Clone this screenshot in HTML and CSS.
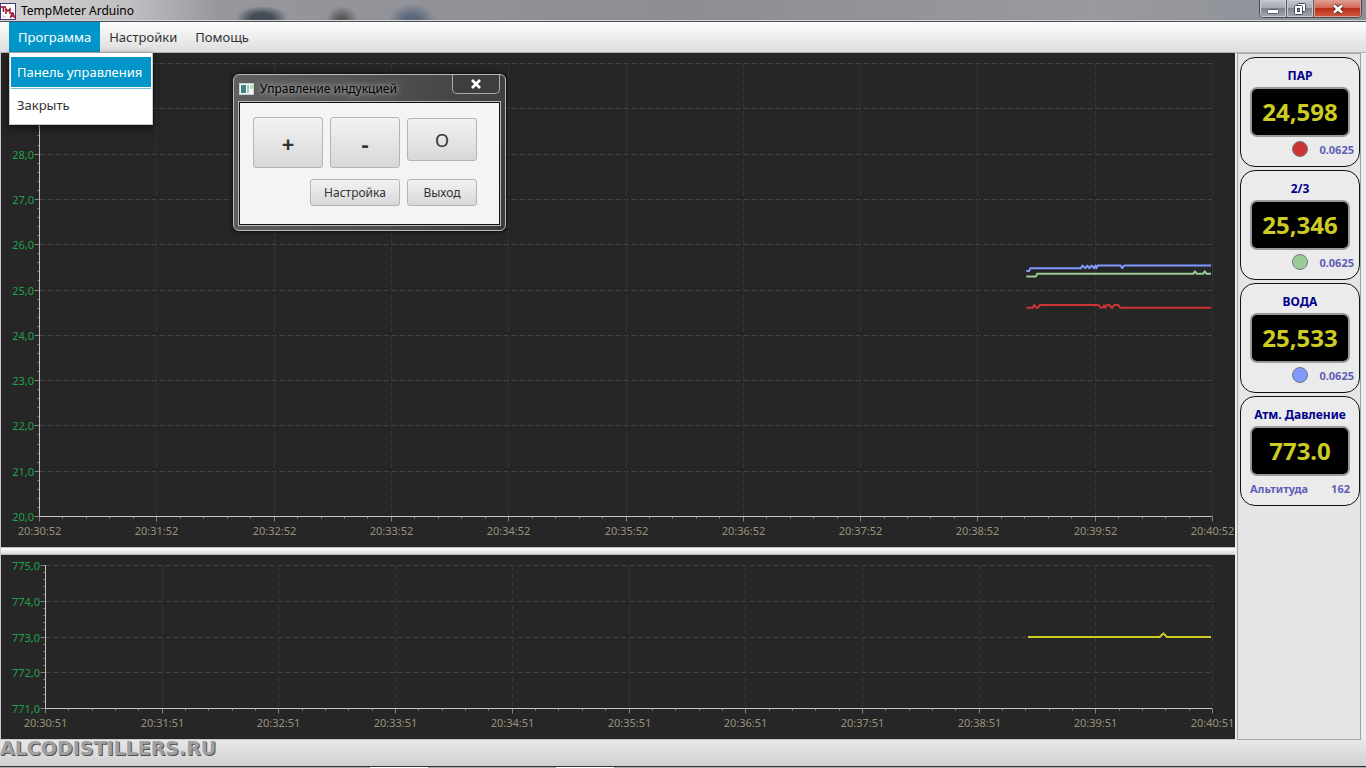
FILE: index.html
```html
<!DOCTYPE html>
<html lang="ru">
<head>
    <meta charset="UTF-8">
    <meta name="viewport" content="width=device-width, initial-scale=1.0">
    <title>TempMeter Arduino</title>
    <link rel="stylesheet" href="styles.css">
</head>
<body>
    <header class="titlebar">
        <svg class="app-icon" width="19" height="18" viewBox="0 0 19 18" aria-hidden="true">
            <rect x="0.5" y="1.500" width="15" height="16" fill="#fff" stroke="#3c3c7c"/>
            <path d="M1 5H6M3.500 5V10M6 12V7L8 9L10 7V12" fill="none" stroke="#a01020" stroke-width="1.500"/>
            <path d="M10.500 16L12 11H13L14.500 16M11 14H14" fill="none" stroke="#a01020" stroke-width="1.500"/>
            <path d="M3 13V16M5 14V16" stroke="#d8b8c0"/>
        </svg>
        <h1>TempMeter Arduino</h1>
        <div class="win-buttons">
            <button class="min" aria-label="Свернуть">
                <svg width="14" height="14" viewBox="0 0 14 14"><rect x="1.5" y="7.5" width="11" height="4" rx="1" fill="#fff" stroke="#555a66"/></svg>
            </button>
            <button class="max" aria-label="Восстановить">
                <svg width="14" height="14" viewBox="0 0 14 14" fill="#fff" stroke="#444a56">
                    <rect x="4.500" y="1.500" width="8" height="8" rx="1"/>
                    <rect x="1.500" y="3.500" width="8" height="9" rx="1"/>
                    <rect x="4.500" y="6.500" width="2" height="3" fill="#8a8f9a"/>
                </svg>
            </button>
            <button class="close" aria-label="Закрыть окно">
                <svg width="14" height="14" viewBox="0 0 14 14"><path d="M3 3.500L11 10.500M11 3.500L3 10.500" stroke="#5a2a24" stroke-width="4.500"/><path d="M3 3.500L11 10.500M11 3.500L3 10.500" stroke="#fff" stroke-width="2.600"/></svg>
            </button>
        </div>
    </header>

    <nav class="menubar">
        <div class="menu">
            <button class="menu-btn active">Программа</button>
            <div class="dropdown">
                <button class="item active">Панель управления</button>
                <button class="item">Закрыть</button>
            </div>
        </div>
        <div class="menu"><button class="menu-btn">Настройки</button></div>
        <div class="menu"><button class="menu-btn">Помощь</button></div>
    </nav>

    <main>
        <div class="charts">
            <svg class="chart" id="temp"></svg>
            <div class="splitter"></div>
            <svg class="chart" id="press"></svg>
        </div>
        <aside class="sensors">
            <section class="card">
                <h2>ПАР</h2>
                <output class="display">24,598</output>
                <p class="info"><span class="dot red"></span><span>0.0625</span></p>
            </section>
            <section class="card">
                <h2>2/3</h2>
                <output class="display">25,346</output>
                <p class="info"><span class="dot green"></span><span>0.0625</span></p>
            </section>
            <section class="card">
                <h2>ВОДА</h2>
                <output class="display">25,533</output>
                <p class="info"><span class="dot blue"></span><span>0.0625</span></p>
            </section>
            <section class="card">
                <h2>Атм. Давление</h2>
                <output class="display">773.0</output>
                <p class="info alt"><span>Альтитуда</span><span>162</span></p>
            </section>
        </aside>
    </main>

    <footer class="statusbar">ALCODISTILLERS.RU</footer>
    <div class="taskbar"><span></span><span></span></div>

    <div class="window" role="dialog" aria-labelledby="win-title">
        <div class="window-head">
            <svg width="15" height="12" viewBox="0 0 15 12" aria-hidden="true">
                <rect x="0.500" y="0.500" width="14" height="11" fill="#f4f8f8" stroke="#c4d0d0"/>
                <rect x="2" y="2" width="5" height="8" fill="#3f8484"/>
                <rect x="8" y="2" width="2" height="8" fill="#a8c4c4"/>
                <rect x="11" y="2" width="3" height="4" fill="#b8e0b8"/>
            </svg>
            <h2 id="win-title">Управление индукцией</h2>
            <button class="window-close" aria-label="Закрыть">
                <svg width="12" height="10" viewBox="0 0 12 10"><path d="M2 1L10 9M10 1L2 9" stroke="#fff" stroke-width="2.600"/></svg>
            </button>
        </div>
        <div class="window-body">
            <button class="big">+</button>
            <button class="big">-</button>
            <button class="power">O</button>
            <button class="setup">Настройка</button>
            <button class="exit">Выход</button>
        </div>
    </div>

    <script src="script.js"></script>
</body>
</html>
```
FILE: styles.css
```css
* {
    box-sizing: border-box;
    margin: 0;
    padding: 0;
}
html , body {
    width: 100%;
    height: 100%;
}
body {
    display: flex;
    flex-direction: column;
    overflow: hidden;
    background-color: #ececec;
    color: #333;
    font-family: "Noto Sans", "Open Sans", sans-serif;
    font-size: 12px;
}
button {
    border: none;
    background: none;
    color: inherit;
    font-family: inherit;
    font-size: 12px;
}
svg {
    display: block;
}

/* title bar */
.titlebar {
    display: flex;
    align-items: center;
    flex: none;
    height: 22px;
    padding-right: 4px;
    border-bottom: 1px solid #50525a;
    box-shadow: inset 0 -1px #d4d5da;
    background:
        radial-gradient(ellipse 26px 12px at 262px 18px, #454d56 40%, transparent),
        radial-gradient(ellipse 16px 14px at 342px 20px, #585858 20%, transparent),
        radial-gradient(ellipse 24px 16px at 412px 20px, #5c697c 30%, transparent),
        linear-gradient(90deg, #d4d2d4, #c0bfc2 130px, #96969c 220px, #8c8e94 50%, #999a9f 80%, #8b8f97);
}
.titlebar h1 {
    flex: 1;
    margin-left: 2px;
    color: #000;
    font-size: 12px;
    font-weight: normal;
}
.win-buttons {
    display: flex;
    align-self: flex-start;
    height: 18px;
    border: 1px solid #484b52;
    border-top: none;
    border-radius: 0 0 5px 5px;
    overflow: hidden;
}
.win-buttons button {
    display: flex;
    align-items: center;
    justify-content: center;
    width: 27px;
    border-right: 1px solid #555860;
    background: linear-gradient(#c4c7cd, #a4a8b0 50%, #7f848e 50%, #a2a7b0);
    box-shadow: inset 0 0 0 1px #c8cbd2;
}
.win-buttons .close {
    width: 47px;
    border-right: none;
    background: linear-gradient(#e0a095, #d0604c 50%, #b8301a 50%, #d05a40);
    box-shadow: inset 0 0 0 1px #e09c90;
}

/* menu */
.menubar {
    display: flex;
    flex: none;
    height: 31px;
    padding-left: 9px;
    border-bottom: 1px solid #b4b4b4;
    background: linear-gradient(#fcfcfc, #dedede);
}
.menu {
    position: relative;
}
.menu-btn {
    height: 30px;
    padding: 0 9px;
    font-size: 13px;
}
.active {
    background-color: #0096c9;
    color: #fff;
}
.dropdown {
    position: absolute;
    top: 31px;
    left: 0;
    z-index: 2;
    width: 144px;
    padding: 4px 1px 3px;
    border: 1px solid #c8c8c8;
    border-top: none;
    background-color: #fff;
    box-shadow: 0 3px 8px rgba(0, 0, 0, 0.6);
}
.item {
    display: block;
    width: 100%;
    height: 30px;
    padding-left: 6px;
    font-size: 13px;
    text-align: left;
    white-space: nowrap;
}
.item + .item {
    height: 33px;
    border-top: 1px solid #7fbcd4;
    margin-top: 1px;
}

/* charts */
main {
    display: flex;
    flex: 1;
    min-height: 0;
    padding-right: 5px;
}
.charts {
    display: grid;
    grid-template-rows: 1fr 8px 184px;
    flex: 1;
    min-width: 0;
    border-left: 1px solid #c8c8c8;
    border-bottom: 1px solid #c8c8c8;
}
.chart {
    width: 100%;
    height: 100%;
    background-color: #262626;
}
.splitter {
    border: 1px solid #bbb;
    border-width: 1px 0;
    background: linear-gradient(#fff, #dcdcdc);
}
.chart text {
    font-size: 11px;
}
.grid {
    stroke: #444;
    stroke-dasharray: 5 3;
}
.grid.v {
    stroke: #383838;
}
.axis {
    stroke: #c4c4c4;
}
.tick {
    stroke: #808080;
}
.y-label {
    fill: #22a04c;
    text-anchor: end;
}
.x-label {
    fill: #98927a;
    text-anchor: middle;
}
.line {
    fill: none;
    stroke-width: 2;
    stroke-linejoin: round;
}

/* sensors */
.sensors {
    display: flex;
    flex-direction: column;
    gap: 3px;
    flex: none;
    width: 124px;
    margin-left: 2px;
    padding: 3px 0 0 2px;
    border: 1px solid #a4a4a4;
    background-color: #e5e5e5;
}
.card {
    display: flex;
    flex-direction: column;
    align-items: center;
    width: 120px;
    height: 110px;
    padding: 9px 5px 0;
    border: 1px solid #111;
    border-radius: 15px;
    background-color: #ebebeb;
}
.card h2 {
    color: #00008b;
    font-size: 12px;
    line-height: 18px;
}
.display {
    width: 100px;
    height: 50px;
    margin-top: 2px;
    border: 2px solid #999;
    border-radius: 7px;
    background-color: #000;
    color: #cccc22;
    font-size: 24px;
    font-weight: bold;
    line-height: 46px;
    text-align: center;
}
.info {
    display: grid;
    grid-template-columns: 1fr 16px 1fr;
    align-items: center;
    width: 100%;
    height: 24px;
    color: #5f5fb8;
    font-size: 11px;
    font-weight: bold;
}
.info span:last-child {
    justify-self: end;
}
.info .dot {
    grid-column: 2;
}
.info.alt {
    display: flex;
    justify-content: space-between;
    padding: 0 4px;
}
.dot {
    width: 16px;
    height: 16px;
    border: 1px solid #777;
    border-radius: 50%;
}
.red {
    background-color: #cc3333;
}
.green {
    background-color: #99cc99;
}
.blue {
    background-color: #8099ff;
}

/* bottom */
.statusbar {
    flex: none;
    height: 26px;
    background: linear-gradient(#e8e8e8, #d0d0d0);
    color: #a0a0a0;
    font-family: "DejaVu Sans", sans-serif;
    font-size: 19px;
    font-weight: bold;
    line-height: 16px;
    text-shadow: 1px 1px #505050;
}
.taskbar {
    display: flex;
    gap: 128px;
    flex: none;
    height: 2px;
    padding-left: 370px;
    border-top: 1px solid #333;
    background-color: #aaa;
}
.taskbar span {
    width: 58px;
    background-color: #fff;
}

/* induction window */
.window {
    position: absolute;
    top: 74px;
    left: 233px;
    width: 273px;
    padding: 0 5px 5px;
    border: 1px solid #b8b8b8;
    border-radius: 6px;
    background: linear-gradient(100deg, #606060, #4c4c4c 60%, #3c3c3c);
    box-shadow: 0 0 4px #000;
}
.window-head {
    display: flex;
    align-items: center;
    height: 27px;
}
.window-head h2 {
    flex: 1;
    margin-left: 6px;
    color: #000;
    font-size: 12px;
    font-weight: normal;
    text-shadow: 0 0 5px #bbb, 0 0 10px #aaa;
}
.window-close {
    display: flex;
    align-items: center;
    justify-content: center;
    align-self: flex-start;
    width: 48px;
    height: 19px;
    border: 1px solid #aaa;
    border-top: none;
    border-radius: 0 0 5px 5px;
    background-color: #3e3e3e;
}
.window-body {
    display: grid;
    grid-template-columns: 70px 70px 70px;
    gap: 11px 7px;
    padding: 14px 13px 18px;
    border: 1px solid #111;
    outline: 1px solid #bbb;
    background-color: #f4f4f4;
}
.window-body button {
    height: 27px;
    border: 1px solid #b4b4b4;
    border-radius: 3px;
    background: linear-gradient(#f2f2f2, #d8d8d8);
}
.window-body .big {
    height: 51px;
    font-size: 22px;
    font-weight: bold;
}
.window-body .power {
    align-self: center;
    height: 43px;
    margin-bottom: 6px;
    font-size: 18px;
}
.window-body .setup {
    grid-column: 1 / 3;
    justify-self: end;
    width: 90px;
}
```
FILE: script.js
```js
// time is in seconds from the left edge of the chart
const temp = {
    id: "temp", left: 38, right: 23, top: 10, bottom: 31,
    min: 20, max: 30, labelMax: 28, start: [20, 30, 52],
    lines: [
        { color: "#8099ff", data: [[505,25.42],[506.5,25.42],[507,25.48],[533,25.48],[533.7,25.54],[535.2,25.48],[536.3,25.54],[537.2,25.48],[538.5,25.54],[539.7,25.48],[540.4,25.54],[540.8,25.48],[541.5,25.54],[553.3,25.54],[554.1,25.48],[555,25.54],[599.5,25.54]] },
        { color: "#99cc99", data: [[505,25.3],[510,25.3],[510.6,25.36],[590.5,25.36],[591.3,25.41],[592.1,25.36],[595.5,25.36],[596.3,25.41],[597.1,25.36],[599.5,25.36]] },
        { color: "#cc3333", data: [[505,24.61],[508.3,24.61],[509.1,24.67],[510,24.61],[511,24.61],[512,24.67],[541.9,24.67],[543,24.61],[544,24.61],[544.8,24.66],[545.4,24.61],[546.2,24.67],[547.5,24.67],[548.5,24.61],[549.1,24.61],[550,24.67],[552,24.67],[553,24.61],[599.5,24.61]] }
    ]
};
const press = {
    id: "press", left: 44, right: 23, top: 10, bottom: 31,
    min: 771, max: 775, labelMax: 775, start: [20, 30, 51],
    lines: [
        { color: "#cccc22", data: [[505.4,773],[573.1,773],[575,773.1],[576.8,773],[599.5,773]] }
    ]
};

function line(x1, y1, x2, y2, cls) {
    return `<line x1="${x1}" y1="${y1}" x2="${x2}" y2="${y2}" class="${cls}"/>`;
}

function draw(c) {
    const svg = document.getElementById(c.id);
    const x2 = svg.clientWidth - c.right;
    const y2 = svg.clientHeight - c.bottom;
    const getX = t => c.left + (x2 - c.left) * t / 600;
    const getY = v => y2 + 0.5 - (y2 - c.top) * (v - c.min) / (c.max - c.min);
    const base = y2 + 0.5;
    const side = c.left + 0.5;
    let out = "";

    for (let i = 0; i <= (c.max - c.min) * 5; i++) {
        const v = c.min + i / 5;
        const y = Math.floor(getY(v)) + 0.5;
        const major = i % 5 === 0;
        if (major && i > 0) out += line(side, y, x2, y, "grid");
        out += line(side - (major ? 5 : 2), y, side, y, "tick");
        if (major && v <= c.labelMax) {
            out += `<text x="${c.left - 5}" y="${y + 4}" class="y-label">${v},0</text>`;
        }
    }
    for (let i = 0; i <= 50; i++) {
        const x = Math.round(getX(i * 12)) + 0.5;
        const major = i % 5 === 0;
        if (major && i > 0) out += line(x, c.top, x, base, "grid v");
        out += line(x, base, x, base + (major ? 5 : 2), "tick");
        if (major) {
            const text = `${c.start[0]}:${c.start[1] + i / 5}:${c.start[2]}`;
            out += `<text x="${x}" y="${base + 18}" class="x-label">${text}</text>`;
        }
    }
    out += line(side, c.top, side, base, "axis") + line(side, base, x2, base, "axis");
    for (const l of c.lines) {
        const points = l.data.map(p => getX(p[0]) + "," + getY(p[1])).join(" ");
        out += `<polyline points="${points}" class="line" stroke="${l.color}"/>`;
    }
    svg.innerHTML = out;
}

function drawAll() {
    draw(temp);
    draw(press);
}
drawAll();
window.addEventListener("resize", drawAll);
```
